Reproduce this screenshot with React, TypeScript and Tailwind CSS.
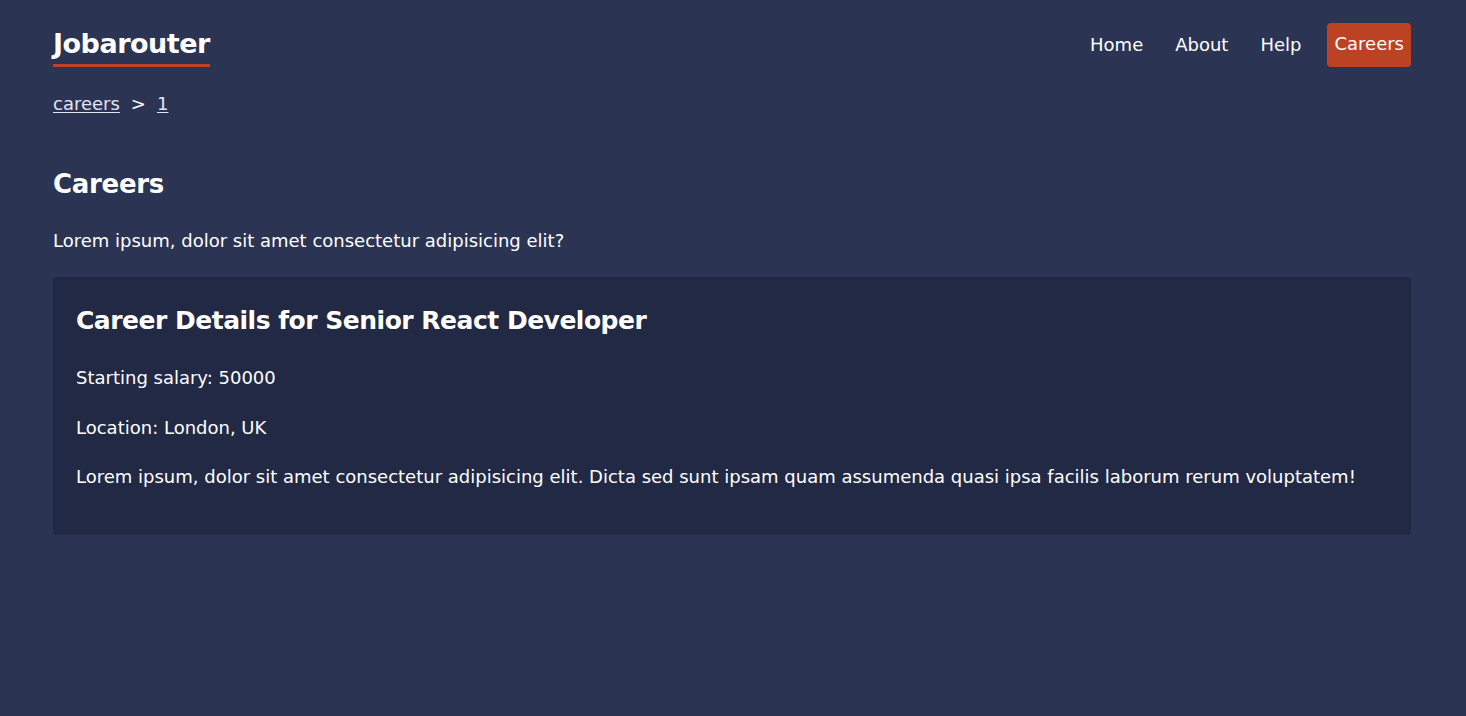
export default function App() {
  const navLinks = ["Home", "About", "Help"];

  return (
    <div className="min-h-screen w-full bg-[#2b3453] text-white font-['DejaVu_Sans',sans-serif]">
      <div className="max-w-[1400px] mx-auto pl-5 pr-[22px]">
        <header className="flex items-end justify-between pt-[23px]">
          <h1 className="text-[27px] leading-[32px] font-bold tracking-[-0.5px] pb-[4px] border-b-[3px] border-[#bd4123]">
            Jobarouter
          </h1>
          <nav className="flex items-center gap-[20px] text-[18px] leading-[30px]">
            {navLinks.map(link => (
              <a key={link} className="px-[6px] py-[6px]">
                {link}
              </a>
            ))}
            <a className="px-[7px] pt-[6px] pb-[8px] rounded bg-[#bd4123]">Careers</a>
          </nav>
        </header>

        <div className="mt-[25px] flex items-center gap-[11px] text-[18px] leading-[24px] text-[#e3e5f3]">
          <a className="underline underline-offset-2">careers</a>
          <span className="text-white">&gt;</span>
          <a className="underline underline-offset-2">1</a>
        </div>

        <h2 className="mt-[52px] text-[26px] leading-[32px] font-bold tracking-[-0.3px]">Careers</h2>
        <p className="mt-[29px] text-[18px] leading-[24px]">
          Lorem ipsum, dolor sit amet consectetur adipisicing elit?
        </p>

        <div className="mt-[24px] rounded bg-[#222944] px-[23px] pt-[27px] pb-[46px]">
          <h2 className="text-[25px] leading-[34px] font-bold tracking-[-0.5px]">
            Career Details for Senior React Developer
          </h2>
          <p className="mt-[28px] text-[18px] leading-[24px]">Starting salary: 50000</p>
          <p className="mt-[26px] text-[18px] leading-[24px]">Location: London, UK</p>
          <p className="mt-[25px] text-[18px] leading-[24px]">
            Lorem ipsum, dolor sit amet consectetur adipisicing elit. Dicta sed sunt ipsam quam assumenda quasi ipsa facilis laborum rerum voluptatem!
          </p>
        </div>
      </div>
    </div>
  );
}
